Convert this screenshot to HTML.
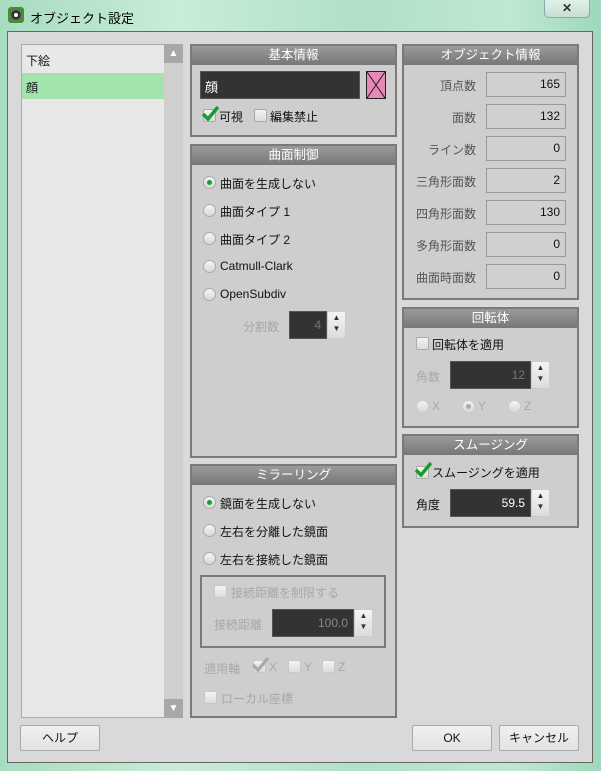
<!DOCTYPE html>
<html><head><meta charset="utf-8"><style>
*{box-sizing:border-box}
body{margin:0;width:601px;height:771px;position:relative;overflow:hidden;
background:linear-gradient(90deg,#a8dcc0,#c8ecd8 30%,#b0e0c8 60%,#bfe8d2 85%,#9fd8bc);
font-family:"Liberation Sans","Noto Sans CJK JP",sans-serif;font-size:12px;color:#111}
.a{position:absolute}
.title{left:30px;top:8px;font-size:13px;color:#000}
.icon{left:8px;top:7px;width:16px;height:16px;background:#4a8a3a;border-radius:3px}
.icon:after{content:"";position:absolute;left:3px;top:3px;width:10px;height:10px;border-radius:50%;background:#fff;box-shadow:inset 0 0 0 3px #333}
.close{left:544px;top:0;width:46px;height:18px;border:1px solid #8aa;border-top:none;border-radius:0 0 5px 5px;background:linear-gradient(#e0f0e8,#c8e0d4);text-align:center;font-size:12px;font-weight:bold;color:#333;line-height:17px}
.dlg{left:7px;top:31px;width:586px;height:732px;background:#d9d9d9;border:1px solid #666}
.list{left:21px;top:44px;width:162px;height:674px;background:#e8e8e8;border:1px solid #aaa}
.sb{left:164px;top:44px;width:19px;height:674px;background:#cfcfcf}
.sbb{width:19px;height:19px;background:#a8a8a8}
.panel{border:2px solid #7a7a7a;background:#cecece}
.hd{position:absolute;left:0;top:0;right:0;height:19px;background:linear-gradient(#9a9a9a,#777);color:#fff;text-align:center;line-height:19px;font-size:12.5px}
.rb{width:13px;height:13px;border-radius:50%;border:1px solid #aaa;background:linear-gradient(#f4f4f4,#d8d8d8)}
.rb.on:after{content:"";position:absolute;left:3px;top:3px;width:5px;height:5px;border-radius:50%;background:#1a9a30}
.cb{width:13px;height:13px;border:1px solid #aaa;background:linear-gradient(#f4f4f4,#dcdcdc);border-radius:2px}
.dis{color:#a8a8a8}
.fld{border:1px solid #999;background:#d0d0d0;text-align:right;padding-right:5px;line-height:22px}
.dark{background:#333;border:1px solid #555;color:#777;text-align:right;padding-right:5px}
.spin{width:19px;background:linear-gradient(#f4f4f4,#dcdcdc);border:1px solid #ccc;font-size:8px;color:#333;text-align:center;line-height:11px}
.btn{border:1px solid #aaa;border-radius:2px;background:linear-gradient(#f0f0f0,#e2e2e2);text-align:center;line-height:24px;font-size:12px}
.lb{width:74px;text-align:right;color:#555}
</style></head><body>
<div class="a icon"></div>
<div class="a title">オブジェクト設定</div>
<div class="a close">✕</div>
<div class="a dlg"></div>

<div class="a list"></div>
<div class="a" style="left:26px;top:52px">下絵</div>
<div class="a" style="left:22px;top:73px;width:142px;height:26px;background:#a2e4ac"></div>
<div class="a" style="left:26px;top:79px">顔</div>
<div class="a sb"><div class="sbb" style="position:absolute;top:0;color:#fff;text-align:center;font-size:10px;line-height:19px">▲</div><div class="sbb" style="position:absolute;bottom:0;color:#fff;text-align:center;font-size:10px;line-height:19px">▼</div></div>

<!-- 基本情報 -->
<div class="a panel" style="left:190px;top:44px;width:207px;height:93px"><div class="hd">基本情報</div></div>
<div class="a" style="left:200px;top:71px;width:160px;height:28px;background:#333;border:1px solid #555;color:#fff;padding:5px 4px;font-size:13px">顔</div>
<div class="a" style="left:366px;top:71px;width:20px;height:28px;background:#e888b8;border:1px solid #222">
<svg width="18" height="26" style="position:absolute;left:0;top:0"><path d="M0 0L18 26M18 0L0 26" stroke="#222" stroke-width="1"/></svg></div>
<div class="a cb" style="left:203px;top:109px"></div>
<svg class="a" style="left:201px;top:105px" width="18" height="16"><path d="M2 9L7 14L17 2" stroke="#1a9a30" stroke-width="3.5" fill="none"/></svg>
<div class="a" style="left:219px;top:108px">可視</div>
<div class="a cb" style="left:254px;top:109px"></div>
<div class="a" style="left:270px;top:108px">編集禁止</div>

<!-- 曲面制御 -->
<div class="a panel" style="left:190px;top:144px;width:207px;height:314px"><div class="hd">曲面制御</div></div>
<div class="a rb on" style="left:203px;top:176px"></div><div class="a" style="left:220px;top:175px">曲面を生成しない</div>
<div class="a rb" style="left:203px;top:204px"></div><div class="a" style="left:220px;top:203px">曲面タイプ 1</div>
<div class="a rb" style="left:203px;top:232px"></div><div class="a" style="left:220px;top:231px">曲面タイプ 2</div>
<div class="a rb" style="left:203px;top:260px"></div><div class="a" style="left:220px;top:259px">Catmull-Clark</div>
<div class="a rb" style="left:203px;top:288px"></div><div class="a" style="left:220px;top:287px">OpenSubdiv</div>
<div class="a dis" style="left:243px;top:318px">分割数</div>
<div class="a dark" style="left:289px;top:311px;width:38px;height:28px;line-height:26px">4</div>
<div class="a spin" style="left:327px;top:311px;height:28px">▲<br>▼</div>

<!-- ミラーリング -->
<div class="a panel" style="left:190px;top:464px;width:207px;height:254px"><div class="hd">ミラーリング</div></div>
<div class="a rb on" style="left:203px;top:496px"></div><div class="a" style="left:220px;top:495px">鏡面を生成しない</div>
<div class="a rb" style="left:203px;top:524px"></div><div class="a" style="left:220px;top:523px">左右を分離した鏡面</div>
<div class="a rb" style="left:203px;top:552px"></div><div class="a" style="left:220px;top:551px">左右を接続した鏡面</div>
<div class="a" style="left:200px;top:575px;width:186px;height:73px;border:2px solid #7a7a7a"></div>
<div class="a cb" style="left:214px;top:585px;border-color:#c8c8c8"></div><div class="a dis" style="left:231px;top:584px">接続距離を制限する</div>
<div class="a dis" style="left:214px;top:616px">接続距離</div>
<div class="a dark" style="left:272px;top:609px;width:82px;height:28px;line-height:26px;color:#888">100.0</div>
<div class="a spin" style="left:354px;top:609px;height:28px">▲<br>▼</div>
<div class="a dis" style="left:204px;top:660px">適用軸</div>
<div class="a cb" style="left:253px;top:660px;border-color:#c8c8c8"></div>
<svg class="a" style="left:251px;top:656px" width="18" height="16"><path d="M2 9L7 14L17 2" stroke="#aaa" stroke-width="3.5" fill="none"/></svg>
<div class="a dis" style="left:269px;top:660px">X</div>
<div class="a cb" style="left:288px;top:660px;border-color:#c8c8c8"></div><div class="a dis" style="left:304px;top:660px">Y</div>
<div class="a cb" style="left:322px;top:660px;border-color:#c8c8c8"></div><div class="a dis" style="left:338px;top:660px">Z</div>
<div class="a cb" style="left:204px;top:691px;border-color:#c8c8c8"></div><div class="a dis" style="left:221px;top:690px">ローカル座標</div>

<!-- オブジェクト情報 -->
<div class="a panel" style="left:402px;top:44px;width:177px;height:256px"><div class="hd">オブジェクト情報</div></div>
<div class="a lb" style="left:402px;top:77px">頂点数</div><div class="a fld" style="left:486px;top:72px;width:80px;height:25px">165</div>
<div class="a lb" style="left:402px;top:109px">面数</div><div class="a fld" style="left:486px;top:104px;width:80px;height:25px">132</div>
<div class="a lb" style="left:402px;top:141px">ライン数</div><div class="a fld" style="left:486px;top:136px;width:80px;height:25px">0</div>
<div class="a lb" style="left:402px;top:173px">三角形面数</div><div class="a fld" style="left:486px;top:168px;width:80px;height:25px">2</div>
<div class="a lb" style="left:402px;top:205px">四角形面数</div><div class="a fld" style="left:486px;top:200px;width:80px;height:25px">130</div>
<div class="a lb" style="left:402px;top:237px">多角形面数</div><div class="a fld" style="left:486px;top:232px;width:80px;height:25px">0</div>
<div class="a lb" style="left:402px;top:269px">曲面時面数</div><div class="a fld" style="left:486px;top:264px;width:80px;height:25px">0</div>

<!-- 回転体 -->
<div class="a panel" style="left:402px;top:307px;width:177px;height:121px"><div class="hd">回転体</div></div>
<div class="a cb" style="left:416px;top:337px"></div><div class="a" style="left:432px;top:336px">回転体を適用</div>
<div class="a dis" style="left:416px;top:368px">角数</div>
<div class="a dark" style="left:450px;top:361px;width:81px;height:28px;line-height:26px">12</div>
<div class="a spin" style="left:531px;top:361px;height:28px">▲<br>▼</div>
<div class="a rb" style="left:416px;top:400px;border-color:#ccc"></div><div class="a dis" style="left:432px;top:399px">X</div>
<div class="a rb" style="left:462px;top:400px;border-color:#ccc"></div><div class="a" style="left:466px;top:404px;width:5px;height:5px;border-radius:50%;background:#aaa"></div><div class="a dis" style="left:478px;top:399px">Y</div>
<div class="a rb" style="left:508px;top:400px;border-color:#ccc"></div><div class="a dis" style="left:524px;top:399px">Z</div>

<!-- スムージング -->
<div class="a panel" style="left:402px;top:434px;width:177px;height:94px"><div class="hd">スムージング</div></div>
<div class="a cb" style="left:416px;top:466px"></div>
<svg class="a" style="left:414px;top:461px" width="18" height="16"><path d="M2 9L7 14L17 2" stroke="#1a9a30" stroke-width="3.5" fill="none"/></svg>
<div class="a" style="left:432px;top:464px">スムージングを適用</div>
<div class="a" style="left:416px;top:496px">角度</div>
<div class="a dark" style="left:450px;top:489px;width:81px;height:28px;line-height:26px;color:#fff">59.5</div>
<div class="a spin" style="left:531px;top:489px;height:28px">▲<br>▼</div>

<div class="a btn" style="left:20px;top:725px;width:80px;height:26px">ヘルプ</div>
<div class="a btn" style="left:412px;top:725px;width:80px;height:26px">OK</div>
<div class="a btn" style="left:499px;top:725px;width:80px;height:26px">キャンセル</div>
</body></html>
